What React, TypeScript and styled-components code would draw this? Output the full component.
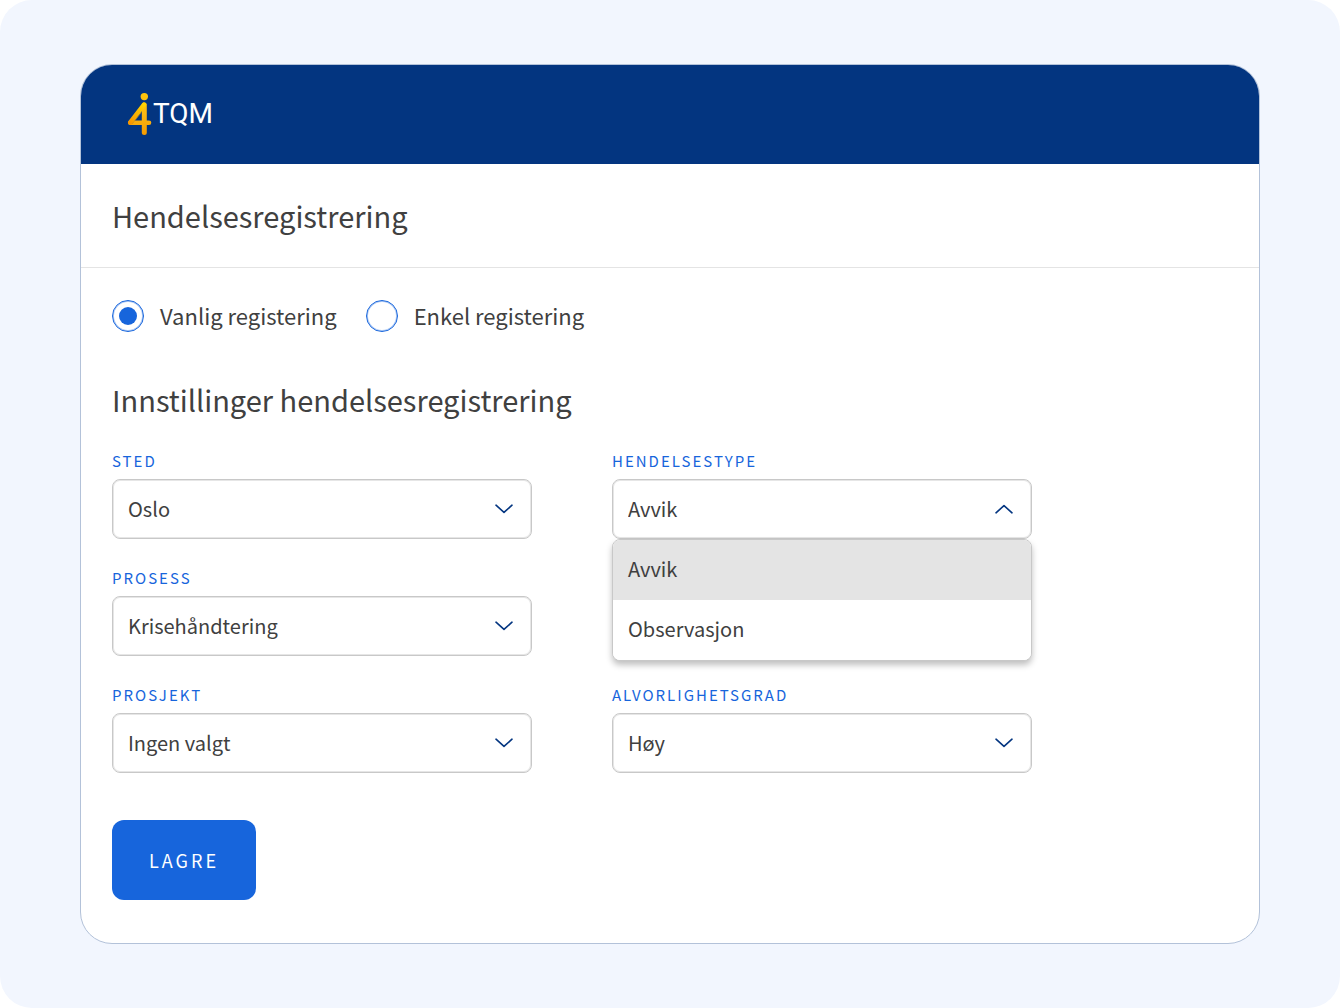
import React, { useState } from "react";
import styled, { createGlobalStyle } from "styled-components";

const sans = `"Source Sans Pro", "Noto Sans CJK SC", "Noto Sans", sans-serif`;

const color = {
  stage: "#f2f6fe",
  navy: "#033580",
  blue: "#1765dc",
  softBlue: "#a9c6f3",
  text: "#404040",
  line: "#c8c8c8",
  softLine: "#e6e6e6",
  divider: "#e4e4e4",
  cardLine: "#b3c2d9",
  active: "#e4e4e4",
};

const GlobalStyle = createGlobalStyle`
  *, *::before, *::after { box-sizing: border-box; }
  body {
    margin: 0;
    background: #fff;
    color: ${color.text};
    font-family: ${sans};
  }
  button, input, select { font-family: inherit; }
`;

const Stage = styled.div`
  display: flex;
  min-height: 100vh;
  padding: 64px 80px;
  border-radius: 32px;
  background: ${color.stage};
`;

const Card = styled.main`
  flex: 1;
  min-width: 0;
  border: 1px solid ${color.cardLine};
  border-radius: 32px;
  background: #fff;
  overflow: hidden;
`;

const TopBar = styled.header`
  display: flex;
  align-items: center;
  height: 99px;
  padding: 0 46px 2px;
  background: ${color.navy};
`;

const Brand = styled.div`
  display: flex;
  align-items: center;
  gap: 1px;
  color: #fff;
  font-family: Roboto, ${sans};
  font-size: 28px;
  line-height: 44px;
`;

const TitleRow = styled.div`
  padding: 31px 31px 32px;
  border-bottom: 1px solid ${color.divider};
`;

const Title = styled.h1`
  margin: 0;
  font-size: 29px;
  font-weight: 400;
  line-height: 40px;
`;

const Form = styled.form`
  padding: 32px 31px 40px;
`;

const RadioGroup = styled.div`
  display: flex;
  flex-wrap: wrap;
  gap: 16px 29px;
`;

const RadioLabel = styled.label`
  display: flex;
  align-items: flex-start;
  gap: 16px;
  font-size: 22px;
  line-height: 30px;
`;

const Radio = styled.input`
  display: grid;
  place-items: center;
  appearance: none;
  width: 32px;
  height: 32px;
  margin: 0;
  border: 1px solid ${color.blue};
  border-radius: 50%;
  background: #fff;
  box-shadow: inset 0 0 0 1px ${color.softBlue};

  &:checked::after {
    content: "";
    width: 18px;
    height: 18px;
    border-radius: 50%;
    background: ${color.blue};
  }
`;

const SectionTitle = styled.h2`
  margin: 47px 0 32px;
  font-size: 29px;
  font-weight: 400;
  line-height: 40px;
`;

const Fields = styled.div`
  display: grid;
  grid-template-columns: repeat(2, minmax(0, 420px));
  gap: 29px 80px;
`;

const FieldBox = styled.div<{ $column: number; $row: number }>`
  grid-column: ${(p) => p.$column};
  grid-row: ${(p) => p.$row};
`;

const FieldLabel = styled.label`
  display: block;
  margin-bottom: 8px;
  color: ${color.blue};
  font-size: 15px;
  letter-spacing: 2px;
  line-height: 20px;
  text-transform: uppercase;
`;

const Control = styled.div`
  position: relative;
  display: grid;
  align-items: center;

  & > select,
  & > svg {
    grid-area: 1 / 1;
  }
`;

const Select = styled.select`
  appearance: none;
  width: 100%;
  height: 60px;
  padding: 0 48px 2px 15px;
  border: 1px solid ${color.line};
  border-radius: 8px;
  background: #fff;
  box-shadow: inset 0 0 0 1px ${color.softLine};
  color: ${color.text};
  font-size: 20px;
`;

const ChevronIcon = styled.svg<{ $open: boolean }>`
  justify-self: end;
  margin-right: 18px;
  pointer-events: none;
  transform: ${(p) => (p.$open ? "rotate(180deg)" : "none")};
`;

const Menu = styled.ul`
  position: absolute;
  z-index: 1;
  top: 100%;
  left: 0;
  right: 0;
  margin: 0;
  padding: 0;
  list-style: none;
  border: 1px solid ${color.line};
  border-radius: 8px;
  background: #fff;
  box-shadow: 0 4px 6px rgba(0, 0, 0, 0.25);
  overflow: hidden;
`;

const MenuOption = styled.li<{ $active: boolean }>`
  height: 60px;
  padding: 0 15px;
  background: ${(p) => (p.$active ? color.active : "#fff")};
  font-size: 20px;
  line-height: 58px;
  cursor: pointer;
`;

const SaveButton = styled.button`
  min-width: 144px;
  height: 80px;
  margin-top: 47px;
  border: 0;
  border-radius: 12px;
  background: ${color.blue};
  color: #fff;
  font-size: 18px;
  letter-spacing: 3px;
`;

function LogoMark() {
  return (
    <svg width="25" height="44" viewBox="0 0 25 44" fill="none" aria-hidden="true">
      <defs>
        <linearGradient id="mark" x1="0" y1="0" x2="0" y2="44" gradientUnits="userSpaceOnUse">
          <stop offset="0" stopColor="#ffc60a" />
          <stop offset="0.5" stopColor="#fdb913" />
          <stop offset="1" stopColor="#f59a00" />
        </linearGradient>
        <linearGradient id="slant" x1="16" y1="12" x2="2" y2="31" gradientUnits="userSpaceOnUse">
          <stop offset="0" stopColor="#ffd400" />
          <stop offset="1" stopColor="#f79400" />
        </linearGradient>
      </defs>
      <circle cx="17.3" cy="4.6" r="3.7" fill="url(#mark)" />
      <path d="M17.3 13V40.5" stroke="url(#mark)" strokeWidth="5" strokeLinecap="round" />
      <path d="M3.2 30.8H22" stroke="url(#mark)" strokeWidth="4.6" strokeLinecap="round" />
      <path d="M17 12.6L3.3 30.5" stroke="url(#slant)" strokeWidth="4.6" strokeLinecap="round" />
      <path d="M5.2 32L14.4 20.4" stroke="#c98a1c" strokeWidth="0.6" />
    </svg>
  );
}

function Chevron({ open = false }: { open?: boolean }) {
  return (
    <ChevronIcon $open={open} width="20" height="12" viewBox="0 0 20 12" fill="none" aria-hidden="true">
      <path
        d="M2 2.2L10 9.4L18 2.2"
        stroke={color.navy}
        strokeWidth="1.6"
        strokeLinecap="round"
        strokeLinejoin="round"
      />
    </ChevronIcon>
  );
}

type FieldProps = {
  id: string;
  label: string;
  options: string[];
  column: number;
  row: number;
  initiallyOpen?: boolean;
};

function SelectField({ id, label, options, column, row, initiallyOpen = false }: FieldProps) {
  const [value, setValue] = useState(options[0]);
  const [open, setOpen] = useState(initiallyOpen);

  const choose = (next: string) => {
    setValue(next);
    setOpen(false);
  };

  return (
    <FieldBox $column={column} $row={row}>
      <FieldLabel htmlFor={id}>{label}</FieldLabel>
      <Control>
        <Select id={id} value={value} onChange={(e) => choose(e.target.value)}>
          {options.map((option) => (
            <option key={option}>{option}</option>
          ))}
        </Select>
        <Chevron open={open} />
        {open && (
          <Menu role="listbox" aria-label={label}>
            {options.map((option) => (
              <MenuOption
                key={option}
                role="option"
                aria-selected={option === value}
                $active={option === value}
                onClick={() => choose(option)}
              >
                {option}
              </MenuOption>
            ))}
          </Menu>
        )}
      </Control>
    </FieldBox>
  );
}

export default function App() {
  const [mode, setMode] = useState("vanlig");

  return (
    <>
      <GlobalStyle />
      <Stage>
        <Card>
          <TopBar>
            <Brand>
              <LogoMark />
              <span>TQM</span>
            </Brand>
          </TopBar>
          <TitleRow>
            <Title>Hendelsesregistrering</Title>
          </TitleRow>
          <Form onSubmit={(e) => e.preventDefault()}>
            <RadioGroup>
              <RadioLabel>
                <Radio
                  type="radio"
                  name="mode"
                  checked={mode === "vanlig"}
                  onChange={() => setMode("vanlig")}
                />
                Vanlig registering
              </RadioLabel>
              <RadioLabel>
                <Radio
                  type="radio"
                  name="mode"
                  checked={mode === "enkel"}
                  onChange={() => setMode("enkel")}
                />
                Enkel registering
              </RadioLabel>
            </RadioGroup>
            <SectionTitle>Innstillinger hendelsesregistrering</SectionTitle>
            <Fields>
              <SelectField id="sted" label="Sted" options={["Oslo"]} column={1} row={1} />
              <SelectField
                id="hendelsestype"
                label="Hendelsestype"
                options={["Avvik", "Observasjon"]}
                column={2}
                row={1}
                initiallyOpen
              />
              <SelectField id="prosess" label="Prosess" options={["Krisehåndtering"]} column={1} row={2} />
              <SelectField id="prosjekt" label="Prosjekt" options={["Ingen valgt"]} column={1} row={3} />
              <SelectField id="alvorlighetsgrad" label="Alvorlighetsgrad" options={["Høy"]} column={2} row={3} />
            </Fields>
            <SaveButton type="submit">LAGRE</SaveButton>
          </Form>
        </Card>
      </Stage>
    </>
  );
}
